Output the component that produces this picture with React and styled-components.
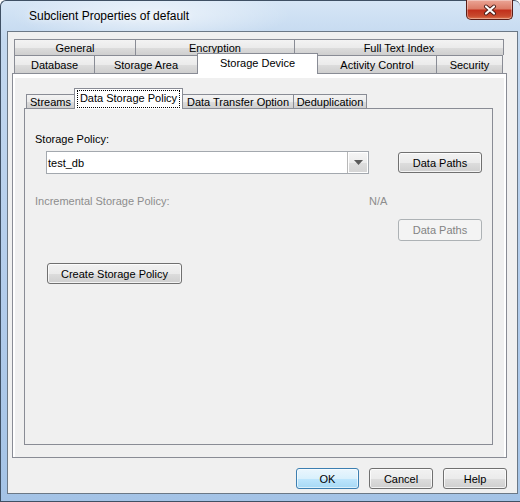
import React from "react";
import styled, { createGlobalStyle, css } from "styled-components";

const Global = createGlobalStyle`
  html, body { margin: 0; padding: 0; background: #fff; }
  *, *::before, *::after { box-sizing: border-box; }
  body { font-family: "Liberation Sans", Arial, sans-serif; font-size: 11px; color: #000; }
`;

const Window = styled.div`
  width: 520px;
  height: 502px;
  display: flex;
  flex-direction: column;
  border: 1px solid #3f5064;
  border-right: none;
  border-radius: 6px 6px 0 0;
  padding: 0 2px 7px 6px;
  background:
    radial-gradient(ellipse 200px 40px at 150px 14px, rgba(255,255,255,0.6), rgba(255,255,255,0) 70%),
    linear-gradient(180deg, #d6e6f6 0%, #c3d8ef 8%, #b2cceb 60%, #a4c3e6 100%);
`;

const TitleBar = styled.div`
  height: 30px;
  display: flex;
  align-items: flex-start;
`;

const Title = styled.div`
  font-size: 12px;
  margin-left: 22px;
  margin-top: 8px;
  color: #000;
  text-shadow: 0 0 6px rgba(255,255,255,0.9);
`;

const CloseButton = styled.div`
  margin-left: auto;
  margin-right: 5px;
  width: 47px;
  height: 20px;
  margin-top: -1px;
  border: 1px solid #5a1e17;
  border-top: none;
  border-radius: 0 0 5px 5px;
  background: linear-gradient(180deg, #eba596 0%, #dc7d68 45%, #c2301c 55%, #c84a2e 85%, #e0764f 100%);
  box-shadow: inset 0 0 0 1px rgba(255,255,255,0.35);
  display: flex;
  align-items: center;
  justify-content: center;
`;

const Client = styled.div`
  flex: 1;
  display: flex;
  flex-direction: column;
  background: #f0f0f0;
  border: 1px solid #6b7886;
  padding: 7px 10px 4px 4px;
`;

const TabControl = styled.div`
  flex: 1;
  display: flex;
  flex-direction: column;
`;

const TabRow = styled.div`
  display: flex;
  align-items: flex-end;
  height: ${p => p.$h}px;
  padding-left: ${p => p.$pad}px;
`;

const tabBase = css`
  flex: none;
  width: ${p => p.$w}px;
  border: 1px solid #898c95;
  border-bottom: none;
  margin-right: -1px;
  display: flex;
  justify-content: center;
  white-space: nowrap;
  overflow: hidden;
`;

const Tab = styled.div`
  ${tabBase}
  height: ${p => p.$h}px;
  align-items: center;
  padding-top: 1px;
  background: linear-gradient(180deg, #f3f3f3 0%, #ebebeb 50%, #dddddd 51%, #cfcfcf 100%);
`;

const ActiveTab = styled.div`
  ${tabBase}
  position: relative;
  z-index: 2;
  height: ${p => p.$h}px;
  margin-bottom: -1px;
  background: #fff;
  align-items: flex-start;
  padding-top: ${p => p.$pt}px;
`;

const Focus = styled.span`
  outline: 1px dotted #000;
  outline-offset: 0;
  padding: 1px 2px 2px;
  line-height: 13px;
`;

const Panel = styled.div`
  position: relative;
  z-index: 1;
  flex: 1;
  display: flex;
  flex-direction: column;
  border: 1px solid #898c95;
  background: #f0f0f0;
  padding: 14px 13px 12px 11px;
  box-shadow: inset 0 4px 0 #fff, inset 2px 0 0 #fff, inset -2px 0 0 #fff;
`;

const InnerPanel = styled.div`
  position: relative;
  z-index: 1;
  flex: 1;
  display: flex;
  flex-direction: column;
  border: 1px solid #898c95;
  background: #f0f0f0;
  padding: 0 10px;
`;

const Label = styled.div`
  line-height: 14px;
  margin-top: ${p => p.$mt || 0}px;
  color: ${p => (p.$disabled ? "#8d8d8d" : "#000")};
`;

const ComboRow = styled.div`
  display: flex;
  align-items: center;
  margin-top: 5px;
  margin-left: 11px;
`;

const Combo = styled.div`
  width: 323px;
  height: 23px;
  background: #fff;
  border: 1px solid #a3a8ae;
  display: flex;
  align-items: center;
  padding-left: 1px;
`;

const ComboText = styled.span`
  flex: 1;
  font-size: 11px;
`;

const ComboArrow = styled.div`
  width: 21px;
  height: 21px;
  border-left: 1px solid #b8b8b8;
  background: linear-gradient(180deg, #f6f6f6 0%, #ececec 50%, #dedede 51%, #d4d4d4 100%);
  box-shadow: inset 0 0 0 1px #fff;
  display: flex;
  align-items: center;
  justify-content: center;
`;

const Button = styled.div`
  flex: none;
  width: ${p => p.$w}px;
  height: ${p => p.$h || 21}px;
  margin-left: ${p => p.$ml || 0}px;
  margin-top: ${p => p.$mt || 0}px;
  border: 1px solid #707070;
  border-radius: 3px;
  display: flex;
  align-items: center;
  justify-content: center;
  white-space: nowrap;
  color: #000;
  background: linear-gradient(180deg, #f2f2f2 0%, #ebebeb 50%, #dddddd 51%, #cfcfcf 100%);
  box-shadow: inset 0 0 0 1px rgba(255,255,255,0.75);
  ${p => p.$disabled && css`
    border-color: #adb2b5;
    background: #f4f4f4;
    color: #838383;
    box-shadow: none;
  `}
  ${p => p.$default && css`
    border-color: #3c7fb1;
    background: linear-gradient(180deg, #eaf6fd 0%, #d9f0fc 50%, #bee6fd 51%, #a7d9f5 100%);
    box-shadow: inset 0 0 0 1px rgba(255,255,255,0.6);
  `}
`;

const IncRow = styled.div`
  display: flex;
  margin-top: 20px;
  line-height: 14px;
  color: #8d8d8d;
`;

const IncLabel = styled.span`
  width: 334px;
`;

const ButtonBar = styled.div`
  display: flex;
  justify-content: flex-end;
  gap: 10px;
  margin-top: 10px;
`;

const outerRow1 = [
  ["General", 122],
  ["Encryption", 160],
  ["Full Text Index", 210],
];

const outerRow2 = [
  ["Database", 81],
  ["Storage Area", 104],
  ["Storage Device", 121, true],
  ["Activity Control", 120],
  ["Security", 67],
];

const innerTabs = [
  ["Streams", 49],
  ["Data Storage Policy", 109, true],
  ["Data Transfer Option", 112],
  ["Deduplication", 74],
];

export default function App() {
  return (
    <>
      <Global />
      <Window>
        <TitleBar>
          <Title>Subclient Properties of default</Title>
          <CloseButton>
            <svg width="14" height="12" viewBox="-7 -6 14 12">
              <path d="M-4 -3.5 L4 3.5 M4 -3.5 L-4 3.5" stroke="#4a1d18" strokeWidth="4" strokeLinecap="round" />
              <path d="M-4 -3.5 L4 3.5 M4 -3.5 L-4 3.5" stroke="#fff" strokeWidth="2.2" strokeLinecap="round" />
            </svg>
          </CloseButton>
        </TitleBar>
        <Client>
          <TabControl>
            <TabRow $h={16} $pad={2}>
              {outerRow1.map(([t, w]) => (
                <Tab key={t} $w={w} $h={16}>{t}</Tab>
              ))}
            </TabRow>
            <TabRow $h={18} $pad={2}>
              {outerRow2.map(([t, w, sel]) =>
                sel ? (
                  <ActiveTab key={t} $w={w} $h={21} $pt={3}>{t}</ActiveTab>
                ) : (
                  <Tab key={t} $w={w} $h={18}>{t}</Tab>
                )
              )}
            </TabRow>
            <Panel>
              <TabRow $h={20} $pad={2}>
                {innerTabs.map(([t, w, sel]) =>
                  sel ? (
                    <ActiveTab key={t} $w={w} $h={21} $pt={2}>
                      <Focus>{t}</Focus>
                    </ActiveTab>
                  ) : (
                    <Tab key={t} $w={w} $h={14}>{t}</Tab>
                  )
                )}
              </TabRow>
              <InnerPanel>
                <Label $mt={23}>Storage Policy:</Label>
                <ComboRow>
                  <Combo>
                    <ComboText>test_db</ComboText>
                    <ComboArrow>
                      <svg width="9" height="5" viewBox="0 0 9 5">
                        <path d="M0 0 H9 L4.5 5 Z" fill="#5a5a5a" />
                      </svg>
                    </ComboArrow>
                  </Combo>
                  <Button $w={84} $h={21} $ml={29}>Data Paths</Button>
                </ComboRow>
                <IncRow>
                  <IncLabel>Incremental Storage Policy:</IncLabel>
                  <span>N/A</span>
                </IncRow>
                <Button $w={84} $h={22} $ml={363} $mt={11} $disabled>Data Paths</Button>
                <Button $w={135} $h={21} $ml={12} $mt={22}>Create Storage Policy</Button>
              </InnerPanel>
            </Panel>
          </TabControl>
          <ButtonBar>
            <Button $w={63} $default>OK</Button>
            <Button $w={64}>Cancel</Button>
            <Button $w={64}>Help</Button>
          </ButtonBar>
        </Client>
      </Window>
    </>
  );
}
